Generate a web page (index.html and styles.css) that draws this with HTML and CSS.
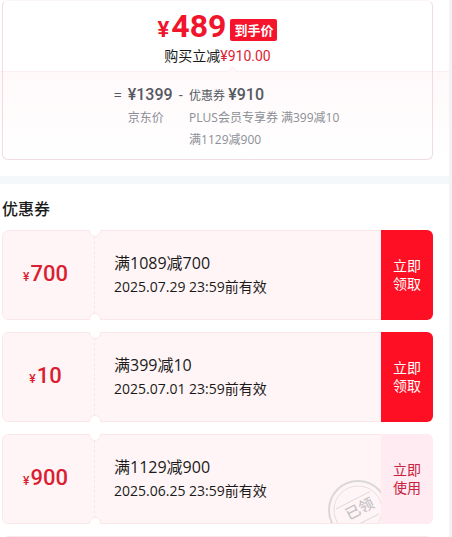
FILE: index.html
```html
<!DOCTYPE html>
<html lang="zh-CN">
<head>
<meta charset="utf-8">
<meta name="viewport" content="width=device-width, initial-scale=1">
<title>优惠券</title>
<link rel="stylesheet" href="styles.css">
</head>
<body>
<main class="panel">
  <section class="deal">
    <div class="deal-card">
      <div class="deal-head">
        <div class="final"><span class="final-price"><small>¥</small>489</span><span class="tag">到手价</span></div>
        <div class="saving">购买立减<span class="saving-value">¥910.00</span></div>
      </div>
      <div class="formula">
        <span class="sign">=</span>
        <span class="amount">¥1399</span>
        <span class="sign">-</span>
        <span class="part">优惠券 <span class="amount">¥910</span></span>
        <span class="note note-base">京东价</span>
        <span class="note note-coupons">PLUS会员专享券 满399减10<br>满1129减900</span>
      </div>
    </div>
  </section>
  <section class="coupons">
    <h2 class="title">优惠券</h2>
    <article class="coupon">
      <div class="value"><small>¥</small>700</div>
      <div class="info"><div class="rule">满1089减700</div><div class="date">2025.07.29 23:59前有效</div></div>
      <button class="action" type="button">立即<br>领取</button>
    </article>
    <article class="coupon">
      <div class="value"><small>¥</small>10</div>
      <div class="info"><div class="rule">满399减10</div><div class="date">2025.07.01 23:59前有效</div></div>
      <button class="action" type="button">立即<br>领取</button>
    </article>
    <article class="coupon">
      <div class="value"><small>¥</small>900</div>
      <div class="info">
        <div class="rule">满1129减900</div><div class="date">2025.06.25 23:59前有效</div>
        <svg class="seal" viewBox="0 0 60 60" aria-label="已领">
          <circle cx="30" cy="30" r="29" fill="none" stroke="#dbd7d9" stroke-width="2"/>
          <circle cx="30" cy="30" r="24" fill="none" stroke="#e4dfe1"/>
          <g transform="rotate(-27 30 30)">
            <path d="M11 19H49M13 43H47" stroke="#dbd7d9" fill="none"/>
            <text class="seal-text" x="32" y="35" text-anchor="middle">已领</text>
          </g>
        </svg>
      </div>
      <button class="action action-use" type="button">立即<br>使用</button>
    </article>
    <div class="coupon"></div>
  </section>
</main>
</body>
</html>
```
FILE: styles.css
```css
* { box-sizing: border-box; }
body {
  margin: 0;
  overflow: hidden;
  background: #fff;
  color: #1a1a1a;
  font-family: "Open Sans", "Noto Sans CJK SC", sans-serif;
  font-size: 14px;
}
.panel {
  height: 100vh;
  overflow: hidden;
  border-right: 3px solid #f3f3f3;
}
.deal {
  isolation: isolate;
  padding: 0 0 16px 2px;
  border-bottom: 8px solid #f4f8fb;
}
.deal-card {
  margin-right: 16px;
  border: 1px solid #f1dce0;
  border-top-color: #fcf5f6;
  border-radius: 6px;
}
.deal-head {
  height: 70px;
  padding-top: 9px;
  text-align: center;
}
.final {
  display: flex;
  justify-content: center;
  align-items: center;
  gap: 4px;
  height: 36px;
}
.final-price {
  color: #f0142c;
  font: 700 32px/36px Roboto, sans-serif;
}
.final-price small { font-size: 22px; margin-right: 2px; }
.tag {
  padding: 0 4px;
  margin-top: 4px;
  border-radius: 2px;
  background: #f6142c;
  color: #fff;
  font-size: 13px;
  font-weight: 700;
  line-height: 22px;
}
.saving { line-height: 20px; }
.saving-value { color: #dc1e36; font-family: Roboto, sans-serif; }
.formula {
  position: relative;
  display: grid;
  grid-template-columns: auto auto auto auto;
  justify-content: center;
  align-items: baseline;
  column-gap: 6px;
  padding: 13px 0 8px 18px;
  line-height: 22px;
  color: #555961;
}
/* tint runs past the card to the panel edges, under the card border */
.formula::after {
  content: "";
  position: absolute;
  z-index: -1;
  inset: 0 -17px 0 -3px;
  border-top: 1px solid #fbeff0;
  background: linear-gradient(#fff9fa, #fff);
}
.formula::before {
  content: "";
  position: absolute;
  top: -3px;
  left: 226px;
  width: 6px;
  height: 6px;
  border: solid #fbeff0;
  border-width: 1px 0 0 1px;
  background: #fff9fa;
  transform: rotate(45deg);
}
.amount { font: 500 16px/22px Roboto, sans-serif; }
.part { font-size: 12px; white-space: nowrap; }
.note { color: #8b8f96; font-size: 12px; line-height: 22px; white-space: nowrap; }
.note-base { grid-column: 2; }
.note-coupons { grid-column: 4; }
.coupons { padding: 14px 16px 0 2px; }
.title {
  margin: 0 0 10px;
  font-size: 16px;
  font-weight: 500;
  line-height: 22px;
}
.coupon {
  position: relative;
  display: flex;
  height: 90px;
  margin-bottom: 12px;
  border: 1px solid #fae7e9;
  border-radius: 6px;
  background: #fff5f6;
  clip-path: inset(0 round 6px);
}
.value {
  flex: 0 0 92px;
  border-right: 1px dashed #f8e6e9;
  padding-right: 6px;
  text-align: center;
  color: #dc1e32;
  font: 500 22px/86px Roboto, sans-serif;
}
.value small { font-size: 12px; margin-right: 1px; }
.value::before, .value::after {
  content: "";
  position: absolute;
  left: 86px;
  width: 10px;
  height: 10px;
  border: 1px solid #fae7e9;
  border-radius: 50%;
  background: #fff;
}
.value::before { top: -6px; }
.value::after { bottom: -6px; }
.info {
  position: relative;
  flex: 1;
  padding: 20px 0 0 19px;
  overflow: hidden;
}
.rule { font-size: 16px; line-height: 24px; }
.date { font-size: 14px; line-height: 24px; }
.action {
  flex: 0 0 52px;
  margin: -1px -1px -1px 0;
  border: 0;
  padding: 0;
  background: #ff0f23;
  color: #fff;
  font: inherit;
  line-height: 18px;
}
.action-use { background: #ffebf1; color: #c9203e; }
.seal {
  position: absolute;
  right: -7px;
  bottom: -17px;
  width: 60px;
  height: 60px;
}
.seal-text { fill: #c6c4c8; font-size: 15px; font-weight: 500; }
```
